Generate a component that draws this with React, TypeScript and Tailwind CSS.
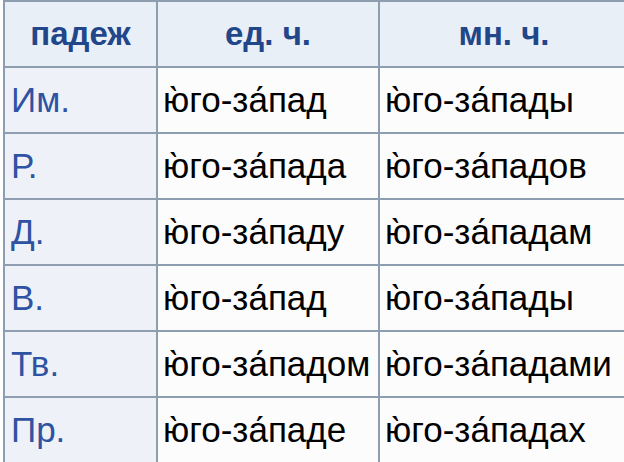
import React from "react";

const rows = [
  ["Им.", "ю̀го-за́пад", "ю̀го-за́пады"],
  ["Р.", "ю̀го-за́пада", "ю̀го-за́падов"],
  ["Д.", "ю̀го-за́паду", "ю̀го-за́падам"],
  ["В.", "ю̀го-за́пад", "ю̀го-за́пады"],
  ["Тв.", "ю̀го-за́падом", "ю̀го-за́падами"],
  ["Пр.", "ю̀го-за́паде", "ю̀го-за́падах"],
];

const App = () => {
  return (
    <div
      className="w-[624px] h-[462px] overflow-hidden bg-white pl-[3px]"
      style={{ fontFamily: '"Liberation Sans", Arial, sans-serif' }}
    >
      <table className="border-collapse table-fixed w-[625px]">
        <colgroup>
          <col className="w-[153px]" />
          <col className="w-[222px]" />
          <col className="w-[250px]" />
        </colgroup>
        <thead>
          <tr className="h-[66px] bg-[#e9eff7]">
            <th className="border-2 border-[#8e9db0] text-center text-[33px] font-bold text-[#21468a]">
              падеж
            </th>
            <th className="border-2 border-[#8e9db0] text-center text-[33px] font-bold text-[#21468a]">
              ед. ч.
            </th>
            <th className="border-2 border-[#8e9db0] text-center text-[33px] font-bold text-[#21468a]">
              мн. ч.
            </th>
          </tr>
        </thead>
        <tbody>
          {rows.map((r) => (
            <tr key={r[0]} className="h-[66px]">
              <td className="border-2 border-[#8e9db0] bg-[#eef2f8] pl-[6px] text-[35px] text-[#2f52a2]">
                {r[0]}
              </td>
              <td className="border-2 border-[#8e9db0] bg-[#fcfcfc] pl-[5px] text-[35px] text-black whitespace-nowrap">
                {r[1]}
              </td>
              <td className="border-2 border-[#8e9db0] bg-[#fcfcfc] pl-[5px] text-[35px] text-black whitespace-nowrap">
                {r[2]}
              </td>
            </tr>
          ))}
        </tbody>
      </table>
    </div>
  );
};

export default App;
